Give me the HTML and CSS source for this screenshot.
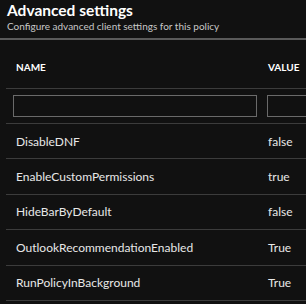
FILE: index.html
```html
<!DOCTYPE html>
<html lang="en">
<head>
    <meta charset="UTF-8">
    <title>Advanced settings</title>
    <link rel="stylesheet" href="styles.css">
</head>
<body>
<div class="blade">
    <div class="blade-head">
        <h1>Advanced settings</h1>
        <p class="subtitle">Configure advanced client settings for this policy</p>
    </div>
    <div class="grid">
        <div class="row head">
            <div class="cell name">NAME</div>
            <div class="cell value">VALUE</div>
        </div>
        <div class="row filter">
            <div class="cell name"><input type="text" class="box"></div>
            <div class="cell value"><input type="text" class="box"></div>
        </div>
        <div class="row">
            <div class="cell name">DisableDNF</div>
            <div class="cell value">false</div>
        </div>
        <div class="row">
            <div class="cell name">EnableCustomPermissions</div>
            <div class="cell value">true</div>
        </div>
        <div class="row">
            <div class="cell name">HideBarByDefault</div>
            <div class="cell value">false</div>
        </div>
        <div class="row">
            <div class="cell name">OutlookRecommendationEnabled</div>
            <div class="cell value">True</div>
        </div>
        <div class="row">
            <div class="cell name">RunPolicyInBackground</div>
            <div class="cell value">True</div>
        </div>
    </div>
</div>
</body>
</html>
```

FILE: styles.css
```css
html, body { margin: 0; padding: 0; background: #111111; }
body { font-family: Lato, "Open Sans", sans-serif; color: #e8e8e8; overflow: hidden; }
.blade { width: 306px; height: 304px; overflow: hidden; }
.blade-head { padding: 0 0 0 7px; border-bottom: 2px solid #5a5a5a; height: 38px; }
h1 { margin: 0; padding-top: 1px; font-size: 15.5px; font-weight: 700; line-height: 19px; color: #ffffff; }
.subtitle { margin: 0; font-size: 10px; line-height: 13px; color: #c8c8c8; }
.grid { margin-left: 6px; width: 340px; }
.row { display: grid; grid-template-columns: 256px 1fr; align-items: center; height: 34.4px; border-bottom: 1px solid #3c3c3c; font-size: 12px; }
.cell.name { padding-left: 10px; }
.cell.value { padding-left: 6px; }
.row.head { height: 48px; align-items: end; font-size: 10px; font-weight: 700; color: #ffffff; }
.row.head .cell { padding-bottom: 15px; }
.row.filter { height: 34px; }
.row.filter .cell.name { padding-left: 7px; }
.row.filter .cell.value { padding-left: 5px; }
.box { box-sizing: border-box; display: block; width: 244px; height: 22px; margin: 0; background: #111111; border: 1px solid #6a6a6a; border-radius: 0; }
.row.filter .cell.value .box { width: 80px; }
```
